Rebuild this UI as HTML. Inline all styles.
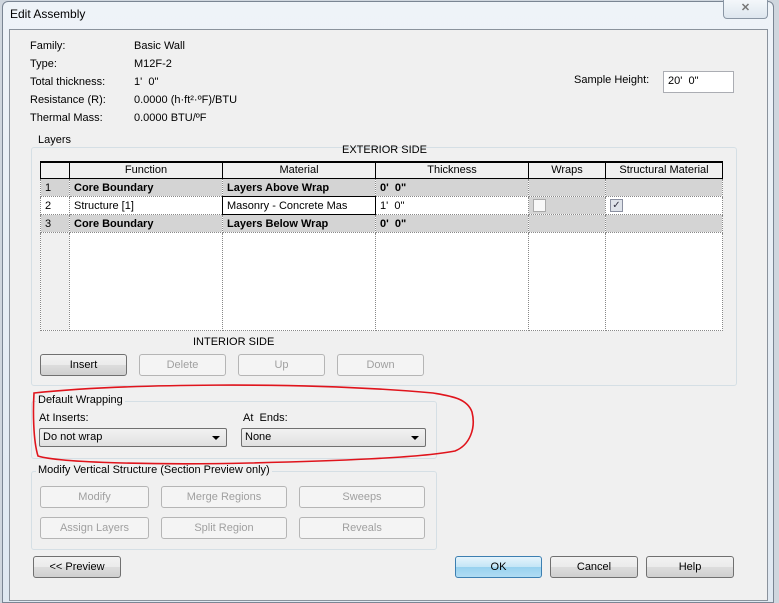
<!DOCTYPE html>
<html><head><style>
body{margin:0;width:779px;height:591px;overflow:hidden;background:#cfd6de;font-family:"Liberation Sans",sans-serif;font-size:11px;color:#000;position:relative}
.a{position:absolute}
.frame{left:2px;top:1px;width:770px;height:600px;background:linear-gradient(#eef3f8,#dfe8f1);border:1px solid #7a8593;border-radius:6px 6px 0 0}
.panel{left:9px;top:29px;width:757px;height:570px;background:#f0f0f0;border:1px solid #8a929c}
.btn{position:absolute;height:20px;border:1px solid #707070;border-radius:3px;background:linear-gradient(#f2f2f2,#ebebeb 50%,#dddddd 51%,#cfcfcf);text-align:center;line-height:20px;box-sizing:border-box}
.dis{border-color:#b5b5b5;background:#f4f4f4;color:#a0a0a0}
.grp{position:absolute;border:1px solid #d5dfe5;border-radius:3px}
.gl{position:absolute;background:#f0f0f0;padding:0 2px}
table{border-collapse:collapse;position:absolute;left:40px;top:161px;width:683px;background:#fff}
td{height:17px;padding:0 0 0 4px;border:1px dotted #888;white-space:nowrap;overflow:hidden}
th{height:13px;line-height:13px;font-weight:normal;border:1px solid #000;border-width:2px 1px 1px 1px;background:#f0f0f0}
.g td{background:#d4d4d4;font-weight:bold}
.sel{position:absolute;height:19px;border:1px solid #707070;border-radius:2px;background:linear-gradient(#f2f2f2,#e0e0e0);box-sizing:border-box;padding-left:3px;line-height:17px}
.sel:after{content:"";position:absolute;right:6px;top:7px;border:4px solid transparent;border-top:4px solid #000}
</style></head><body>
<div class="a frame"></div>
<div class="a" style="left:10px;top:7px;font-size:12px">Edit Assembly</div>
<div class="a" style="left:723px;top:0;width:43px;height:18px;border:1px solid #8a96a4;border-top:none;border-radius:0 0 4px 4px;background:linear-gradient(#f4f7fa,#dde6ee);text-align:center;font-size:11px;line-height:17px;color:#777;font-weight:bold">✕</div>
<div class="a panel"></div>
<div class="a" style="left:30px;top:37px;line-height:18px">Family:<br>Type:<br>Total thickness:<br>Resistance (R):<br>Thermal Mass:</div>
<div class="a" style="left:134px;top:37px;line-height:18px">Basic Wall<br>M12F-2<br>1'&nbsp; 0"<br>0.0000 (h·ft²·ºF)/BTU<br>0.0000 BTU/ºF</div>
<div class="a" style="left:574px;top:74px">Sample Height:</div>
<div class="a" style="left:663px;top:71px;width:71px;height:22px;background:#fff;border:1px solid #abadb3;box-sizing:border-box;padding:3px 0 0 4px">20'&nbsp; 0"</div>

<div class="grp" style="left:31px;top:147px;width:704px;height:237px"></div>
<div class="gl" style="left:36px;top:134px">Layers</div>
<div class="a" style="left:342px;top:144px">EXTERIOR SIDE</div>
<table>
<tr><th style="width:26px;border-right:1px solid #000"></th><th style="width:150px">Function</th><th style="width:150px">Material</th><th style="width:150px">Thickness</th><th style="width:74px">Wraps</th><th>Structural Material</th></tr>
<tr class="g"><td style="font-weight:normal">1</td><td>Core Boundary</td><td>Layers Above Wrap</td><td>0'&nbsp; 0"</td><td></td><td></td></tr>
<tr><td>2</td><td>Structure [1]</td><td style="border:1px solid #000">Masonry - Concrete Mas</td><td>1'&nbsp; 0"</td><td style="background:#d4d4d4"><span style="display:inline-block;width:11px;height:11px;border:1px solid #aaa;background:#f8f8f8;vertical-align:middle"></span></td><td><span style="display:inline-block;width:11px;height:11px;border:1px solid #8a8fa0;background:#dfe3ea;vertical-align:middle;font-size:10px;line-height:11px;text-align:center;color:#334">✓</span></td></tr>
<tr class="g"><td style="font-weight:normal">3</td><td>Core Boundary</td><td>Layers Below Wrap</td><td>0'&nbsp; 0"</td><td></td><td></td></tr>
<tr><td style="height:97px;background:#f0f0f0"></td><td></td><td></td><td></td><td></td><td></td></tr>
</table>
<div class="a" style="left:193px;top:336px">INTERIOR SIDE</div>
<div class="btn" style="left:40px;top:354px;width:87px;height:22px;line-height:21px">Insert</div>
<div class="btn dis" style="left:139px;top:354px;width:87px;height:22px;line-height:21px">Delete</div>
<div class="btn dis" style="left:238px;top:354px;width:87px;height:22px;line-height:21px">Up</div>
<div class="btn dis" style="left:337px;top:354px;width:87px;height:22px;line-height:21px">Down</div>

<div class="grp" style="left:31px;top:401px;width:404px;height:56px"></div>
<div class="gl" style="left:36px;top:394px">Default Wrapping</div>
<div class="a" style="left:39px;top:412px">At Inserts:</div>
<div class="a" style="left:243px;top:412px">At&nbsp; Ends:</div>
<div class="sel" style="left:39px;top:428px;width:188px">Do not wrap</div>
<div class="sel" style="left:241px;top:428px;width:185px">None</div>

<div class="grp" style="left:31px;top:471px;width:404px;height:77px"></div>
<div class="gl" style="left:36px;top:464px">Modify Vertical Structure (Section Preview only)</div>
<div class="btn dis" style="left:40px;top:486px;width:109px;height:22px;line-height:21px">Modify</div>
<div class="btn dis" style="left:161px;top:486px;width:126px;height:22px;line-height:21px">Merge Regions</div>
<div class="btn dis" style="left:299px;top:486px;width:126px;height:22px;line-height:21px">Sweeps</div>
<div class="btn dis" style="left:40px;top:517px;width:109px;height:22px;line-height:21px">Assign Layers</div>
<div class="btn dis" style="left:161px;top:517px;width:126px;height:22px;line-height:21px">Split Region</div>
<div class="btn dis" style="left:299px;top:517px;width:126px;height:22px;line-height:21px">Reveals</div>

<div class="btn" style="left:33px;top:556px;width:88px;height:22px;line-height:21px">&lt;&lt; Preview</div>
<div class="btn" style="left:455px;top:556px;width:87px;height:22px;line-height:21px;border-color:#3c7fb1;background:linear-gradient(#e5f4fc,#c4e5f6 50%,#98d1ef 51%,#b0dcf3)">OK</div>
<div class="btn" style="left:550px;top:556px;width:88px;height:22px;line-height:21px">Cancel</div>
<div class="btn" style="left:646px;top:556px;width:88px;height:22px;line-height:21px">Help</div>

<svg class="a" style="left:0;top:0" width="779" height="591"><path d="M34,393 C120,384 300,381 433,393 C450,396 467,398 472,412 C476,428 470,445 455,451 C420,458 330,461 250,463 C160,465 60,463 38,456 C33,440 33,410 34,393 Z" fill="none" stroke="#e0141c" stroke-width="1.6"/></svg>
</body></html>
